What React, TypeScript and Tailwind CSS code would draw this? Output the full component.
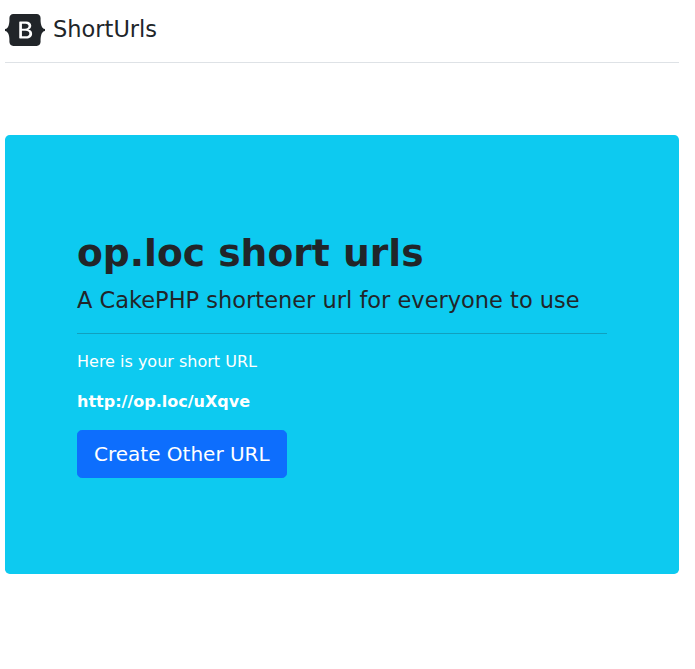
export default function App() {
  return (
    <div className="min-h-screen bg-white pl-[5px] pr-4 pt-3.5 font-['DejaVu_Sans',sans-serif] text-[#212529]">
      <header className="mb-[72px] flex h-[49px] items-start border-b border-[#dee2e6]">
        <a className="flex items-start" href="#">
          <svg className="mr-2 block h-8 w-10" viewBox="0 0 118 94" fill="currentColor" aria-hidden="true">
            <path
              fillRule="evenodd"
              clipRule="evenodd"
              d="M24.509 0c-6.733 0-11.715 5.893-11.492 12.284.214 6.14-.064 14.092-2.066 20.577C8.943 39.365 5.547 43.485 0 44.014v5.972c5.547.529 8.943 4.649 10.951 11.153 2.002 6.485 2.28 14.437 2.066 20.577C12.794 88.106 17.776 94 24.51 94H93.5c6.733 0 11.714-5.893 11.491-12.284-.214-6.14.064-14.092 2.066-20.577 2.009-6.504 5.396-10.624 10.943-11.153v-5.972c-5.547-.529-8.934-4.649-10.943-11.153-2.002-6.484-2.28-14.437-2.066-20.577C105.214 5.894 100.233 0 93.5 0H24.508zM80 57.863C80 66.663 73.436 72 62.543 72H44a2 2 0 01-2-2V24a2 2 0 012-2h18.437c9.083 0 15.044 4.92 15.044 12.474 0 5.302-4.01 10.049-9.119 10.88v.277C75.317 46.394 80 51.21 80 57.863zM60.521 28.34H49.948v14.934h8.905c6.884 0 10.68-2.772 10.68-7.727 0-4.643-3.264-7.207-9.012-7.207zM49.948 49.2v16.458H60.91c7.167 0 10.964-2.876 10.964-8.281 0-5.406-3.903-8.178-11.425-8.178H49.948z"
            />
          </svg>
          <span className="text-[22.5px] leading-[30px]">ShortUrls</span>
        </a>
      </header>
      <main className="h-[439px] rounded-[4.8px] bg-[#0dcaf0] px-[72px] pt-24">
        <h1 className="text-[37.63px] font-bold leading-[45px]">op.loc short urls</h1>
        <p className="mt-2 text-[22.5px] leading-[33px]">A CakePHP shortener url for everyone to use</p>
        <hr className="my-4 border-current opacity-25" />
        <p className="mb-4 text-base text-white">Here is your short URL</p>
        <p className="mb-4 text-base font-bold text-white">http://op.loc/uXqve</p>
        <button className="block h-12 rounded-[4.8px] border border-[#0d6efd] bg-[#0d6efd] px-4 text-xl leading-[30px] text-white">
          Create Other URL
        </button>
      </main>
    </div>
  );
}
